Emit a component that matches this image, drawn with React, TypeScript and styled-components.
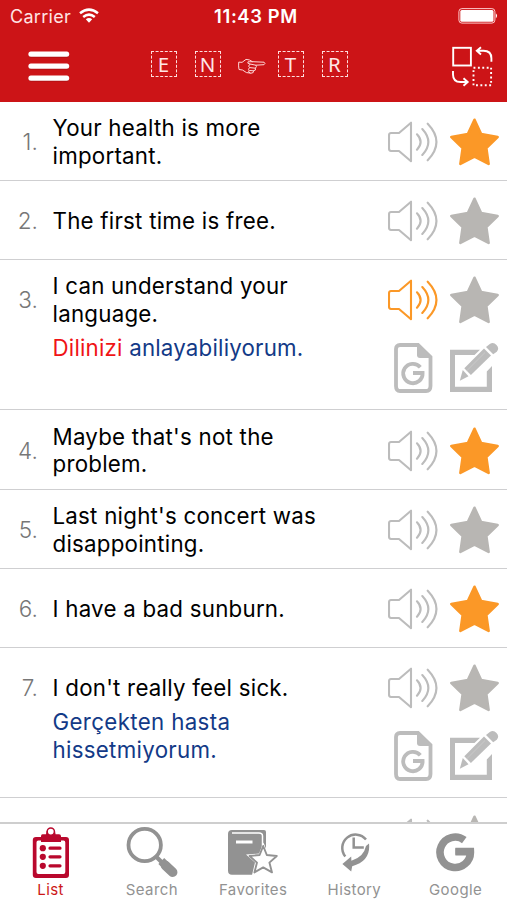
import React from "react";
import styled, { createGlobalStyle } from "styled-components";

const GlobalStyle = createGlobalStyle`
  *, *::before, *::after { box-sizing: border-box; }
  html, body { margin: 0; padding: 0; overflow: hidden; }
  svg { display: block; flex: none; }
`;

const Phone = styled.div`
  width: 507px;
  height: 900px;
  display: flex;
  flex-direction: column;
  overflow: hidden;
  background: #fff;
  font-family: Inter, "Liberation Sans", sans-serif;
`;

const Header = styled.header`
  height: 101.6px;
  flex: none;
  background: #cc1417;
  color: #fff;
`;

const StatusBar = styled.div`
  height: 32px;
  display: grid;
  grid-template-columns: 1fr auto 1fr;
  align-items: center;
  padding: 0 9px 0 10px;
`;

const Carrier = styled.div`
  display: flex;
  align-items: center;
  gap: 8px;
  font-size: 18px;
  letter-spacing: 0.3px;
  color: #ffe4e4;
`;

const Clock = styled.div`
  font-size: 18.4px;
  font-weight: 600;
  letter-spacing: 0.62px;
  padding-left: 4px;
`;

const BatterySlot = styled.div`
  display: flex;
  justify-content: flex-end;
`;

const NavBar = styled.nav`
  height: 69px;
  display: flex;
  align-items: center;
  justify-content: space-between;
  padding: 0 14px 0 28px;
`;

const Languages = styled.div`
  display: flex;
  align-items: center;
  margin: -6px 0 0 -24px;
`;

const LetterBox = styled.span<{ $gap: number }>`
  width: 26px;
  height: 26px;
  margin-right: ${(p) => p.$gap}px;
  border: 1px dashed #ffdede;
  display: flex;
  align-items: center;
  justify-content: center;
  font: 400 20.5px/24px "Noto Sans", sans-serif;
  color: #ffe6e6;
`;

const HandSlot = styled.span`
  padding-top: 5px;
  margin-right: 12px;
`;

const List = styled.main`
  flex: 1;
  min-height: 0;
  overflow: hidden;
`;

const Row = styled.article<{ $open?: boolean }>`
  height: ${(p) => (p.$open ? 150.4 : 79.2)}px;
  display: grid;
  grid-template-columns: 53px 1fr 119px;
  border-bottom: 1px solid #cfcfd1;
`;

const Index = styled.div`
  height: 79px;
  display: flex;
  align-items: center;
  justify-content: flex-end;
  padding: 1px 15px 0 0;
  font-size: 22.5px;
  font-weight: 300;
  letter-spacing: 0.1px;
  color: #777;
`;

const Phrase = styled.div<{ $lines: number }>`
  padding-top: ${(p) => (p.$lines > 1 ? 12.3 : 26.3)}px;
  font-size: 22.3px;
  line-height: 27.8px;
  white-space: nowrap;
  color: #000;
`;

const Line = styled.div<{ $track: number }>`
  margin-left: -0.5px;
  letter-spacing: ${(p) => p.$track}px;
`;

const Translation = styled.div`
  margin-top: 5.7px;
  color: #133a87;
`;

const Highlight = styled.span`
  color: #f01416;
`;

const Actions = styled.div`
  height: 146px;
  display: grid;
  grid-template-columns: 50px 50px;
  grid-template-rows: 81px 55px;
  column-gap: 12px;
  align-items: center;
  justify-items: center;
`;

const TabBar = styled.footer`
  height: 78.5px;
  flex: none;
  display: grid;
  grid-template-columns: repeat(5, 101.25px);
  border-top: 2px solid #cecece;
  background: #fff;
`;

const Tab = styled.div<{ $active?: boolean }>`
  display: flex;
  flex-direction: column;
  align-items: center;
  color: ${(p) => (p.$active ? "#b9082d" : "#929292")};
`;

const TabIcon = styled.div`
  height: 56px;
`;

const TabLabel = styled.div<{ $active?: boolean }>`
  font-size: 15px;
  line-height: 20px;
  letter-spacing: 0.4px;
  color: ${(p) => (p.$active ? "#cc1717" : "#929292")};
`;

const GRAY = "#bcbcbc";
const ORANGE = "#fb9827";

const Wifi = () => (
  <svg width="20" height="16" viewBox="0 0 20 16" fill="none" stroke="#fff" strokeWidth="2.5">
    <path d="M1 5.3Q10-2 19 5.3M4.2 9Q10 4.3 15.8 9" />
    <path d="M6.8 11.2Q10 8.9 13.2 11.2L10 14.7Z" fill="#fff" stroke="none" />
  </svg>
);

const Battery = () => (
  <svg width="40" height="16" viewBox="0 0 40 16">
    <rect x=".9" y=".6" width="36" height="14.5" rx="3" fill="none" stroke="#ffc9c9" />
    <rect x="2.3" y="2" width="33.2" height="11.7" rx="1.5" fill="#fff" />
    <path d="M37.8 5.2Q40.3 7.8 37.8 10.5Z" fill="#fff" />
  </svg>
);

const Menu = () => (
  <svg width="42" height="31" viewBox="0 0 42 31">
    <g fill="#7c0b0d" opacity=".45">
      <rect x="1" y="1.4" width="40" height="5.2" rx="2.6" />
      <rect x="1" y="13.4" width="40" height="5.2" rx="2.6" />
      <rect x="1" y="25.4" width="40" height="5.2" rx="2.6" />
    </g>
    <g fill="#fff">
      <rect x=".4" y="0.6" width="40.8" height="5.2" rx="2.5" />
      <rect x=".4" y="12.6" width="40.8" height="5.2" rx="2.5" />
      <rect x=".4" y="24.6" width="40.8" height="5.2" rx="2.5" />
    </g>
  </svg>
);

const Hand = () => (
  <svg width="28" height="17" viewBox="0 0 28 17" fill="none" stroke="#ffd8d8" strokeWidth="1" strokeLinecap="round" strokeLinejoin="round">
    <path d="M.7 4.5Q.3 8 1 11.5L4.5 12Q8 15.5 13 15.2Q16 15.2 15.5 12.8Q18.4 12.5 17.4 10.2Q19.2 8.6 17.8 7.2L26 6.7Q28 5.2 26 4.2L14.5 3.7Q11.5 1.3 8 1.4L4.4 4.1Z" />
    <path d="M14.5 3.7L10 3.8Q8.7 5.5 12 6L17.8 7.2M11.8 6.3Q9.3 8.4 11.7 9.6L17.4 10.2M11.3 9.7Q9.4 11.8 11.6 12.5L15.5 12.8M10.8 12.6Q9.8 14.5 12 15" />
  </svg>
);

const Swap = () => (
  <svg width="41" height="41" viewBox="0 0 41 41" fill="none" stroke="#fff" strokeWidth="1.9">
    <rect x="1.2" y="1.8" width="17.7" height="17.7" />
    <path d="M39.4 15.8V12.3Q39.4 4.8 31.5 4.8H25M29 1.3L24.8 4.8L29 8.5" />
    <path d="M1 25V28.5Q1 36 8.5 36H15.5M11.5 32.2L15.7 36L11.5 39.8" />
    <rect x="21.5" y="21.7" width="17.6" height="17.6" strokeDasharray="1.9 2.5" />
  </svg>
);

const Speaker = ({ active }: { active?: boolean }) => (
  <svg width="50" height="44" viewBox="0 0 50 44" fill="none" stroke={active ? ORANGE : GRAY} strokeWidth="2.1" strokeLinecap="round" strokeLinejoin="round">
    <path d="M3 13H11L23 2.7V41.3L11 31H3Q1 31 1 28.5V15.5Q1 13 3 13Z" />
    <path d="M29 14.3Q36.2 22 29 29.7M34.3 9Q46.4 22 34.3 35M39.7 3.7Q57.2 22 39.7 40.3" />
  </svg>
);

const Star = ({ active }: { active?: boolean }) => (
  <svg width="50" height="50" viewBox="0 0 50 50">
    <path
      d="M24.5 2.8L31.1 17L47.6 20L36.3 31L38.6 46.9L24.5 39.6L10.4 46.9L12.7 31L1.4 20L17.9 17Z"
      fill={active ? ORANGE : "#b8b6b3"}
      stroke={active ? ORANGE : "#b8b6b3"}
      strokeWidth="2.6"
      strokeLinejoin="round"
    />
  </svg>
);

const GoogleDoc = () => (
  <svg width="39" height="50" viewBox="0 0 39 50">
    <path d="M6 2H24L36.5 14V43Q36.5 48 32 48H6Q2 48 2 43V6Q2 2 6 2Z" fill="none" stroke={GRAY} strokeWidth="3.8" />
    <path d="M23 .5L38.3 15H26Q23 15 23 12Z" fill={GRAY} />
    <path d="M26.3 24.2A9.7 9.7 0 1 0 28.6 30H19" fill="none" stroke={GRAY} strokeWidth="3.8" />
  </svg>
);

const Edit = () => (
  <svg width="50" height="50" viewBox="0 0 50 50">
    <path d="M30 6.7H0V49H42V23L36.8 28.4V43.7H5V12H24.5Z" fill={GRAY} />
    <path d="M12.8 27L18.5 33.2L9.8 37.8Z" fill={GRAY} />
    <path d="M14.3 25.2L34 5.5L41 12.5L20.9 31.9Z" fill={GRAY} />
    <path d="M36 4L39.8 1Q43.5-1.2 46.5 2Q49.7 5.4 46.8 8.7L43.2 11.3Z" fill={GRAY} />
    <path d="M16.8 27.7L35 9.5" stroke="#ccc" strokeWidth=".8" />
  </svg>
);

const ListIcon = () => (
  <svg width="38" height="55" viewBox="0 0 38 55" fill="currentColor">
    <path fillRule="evenodd" d="M4 13H34Q37 13 37 16V51Q37 54 34 54H4Q.8 54 .8 51V16Q.8 13 4 13ZM6.3 16.6Q4.5 16.6 4.5 18.5V48Q4.5 50 6.3 50H31.5Q33.3 50 33.3 48V18.5Q33.3 16.6 31.5 16.6Z" />
    <path d="M10.5 10.2H14Q14.5 4 18.8 4Q23 4 23.6 10.2H27Q29 10.2 29 12.3V18H9V12.3Q9 10.2 10.5 10.2Z" />
    <circle cx="18.8" cy="7.6" r="3.6" fill="#fff" stroke="currentColor" strokeWidth="1.5" />
    <circle cx="10.8" cy="24.2" r="3.1" /><circle cx="10.8" cy="32.8" r="3.1" /><circle cx="10.8" cy="41.8" r="3.1" />
    <path d="M18 24.2H28M18 32.8H28M18 41.8H28" stroke="currentColor" strokeWidth="3.2" strokeLinecap="round" />
  </svg>
);

const SearchIcon = () => (
  <svg width="52" height="55" viewBox="0 0 52 55" fill="none" stroke="currentColor">
    <circle cx="18.7" cy="21" r="16.2" strokeWidth="3.8" />
    <path d="M30.5 33L36 38.5" strokeWidth="4.2" />
    <path d="M35.3 37L40.3 42" strokeWidth="8.2" />
    <path d="M39.5 41.5L46.7 48.3" strokeWidth="9.5" strokeLinecap="round" />
  </svg>
);

const FavoriteIcon = () => (
  <svg width="50" height="55" viewBox="0 0 50 55">
    <path d="M4 6H36Q38 6 38 8V44Q38 50.8 34 50.8H4Q0 50.8 0 46.5V10Q0 6 4 6Z" fill="currentColor" />
    <path d="M4 9H31Q34.5 9 34.5 12V50" fill="none" stroke="#fff" strokeWidth="1.5" />
    <path d="M8 18H24.5" stroke="#fff" strokeWidth="3" />
    <path d="M35.5 18.5L40 29.5L52 30.5L43 38.5L46 51H24L27 38.5L18 30.5L31 29.5Z" fill="#fff" />
    <path d="M35.2 22L38.8 31L48.8 32L41.4 38.6L44 48.4L35.2 43.4L26.4 48.4L29 38.6L21.6 32L31.6 31Z" fill="#fff" stroke="currentColor" strokeWidth="1.9" strokeLinejoin="round" />
  </svg>
);

const HistoryIcon = () => (
  <svg width="32" height="55" viewBox="0 0 32 55" fill="none" stroke="currentColor">
    <path d="M7.3 32.5A12.9 12.9 0 1 1 28 15.5" strokeWidth="2.5" />
    <path d="M15.7 13.5V23.5H25.8" strokeWidth="2.5" />
    <path d="M31 19.5Q33 37 14.2 42.2L13.2 47.5L4.4 40L13.2 32.5L13.4 36.7Q25.8 33 28 22Z" fill="currentColor" stroke="none" />
  </svg>
);

const GoogleIcon = () => (
  <svg width="39" height="55" viewBox="0 0 39 55" fill="none" stroke="currentColor" strokeWidth="7.6">
    <path d="M28.3 16.1A15.2 15.2 0 1 0 34.4 27.6H19.4" />
    <path d="M19.4 27.5H38" strokeWidth="6.5" />
  </svg>
);

type Entry = {
  lines: string[];
  starred?: boolean;
  playing?: boolean;
  translation?: React.ReactNode;
};

const entries: Entry[] = [
  { lines: ["Your health is more", "important."], starred: true },
  { lines: ["The first time is free."] },
  {
    lines: ["I can understand your", "language."],
    playing: true,
    translation: <Line $track={0.2}><Highlight>Dilinizi</Highlight> anlayabiliyorum.</Line>,
  },
  { lines: ["Maybe that's not the", "problem."], starred: true },
  { lines: ["Last night's concert was", "disappointing."] },
  { lines: ["I have a bad sunburn."], starred: true },
  {
    lines: ["I don't really feel sick."],
    translation: <><Line $track={0.35}>Gerçekten hasta</Line><Line $track={0.3}>hissetmiyorum.</Line></>,
  },
];

const tabs = [
  { label: "List", icon: <ListIcon />, active: true },
  { label: "Search", icon: <SearchIcon /> },
  { label: "Favorites", icon: <FavoriteIcon /> },
  { label: "History", icon: <HistoryIcon /> },
  { label: "Google", icon: <GoogleIcon /> },
];

export default function App() {
  return (
    <>
      <GlobalStyle />
      <Phone>
        <Header>
          <StatusBar>
            <Carrier>Carrier <Wifi /></Carrier>
            <Clock>11:43 PM</Clock>
            <BatterySlot><Battery /></BatterySlot>
          </StatusBar>
          <NavBar>
            <Menu />
            <Languages>
              <LetterBox $gap={18}>E</LetterBox>
              <LetterBox $gap={17}>N</LetterBox>
              <HandSlot><Hand /></HandSlot>
              <LetterBox $gap={18}>T</LetterBox>
              <LetterBox $gap={0}>R</LetterBox>
            </Languages>
            <Swap />
          </NavBar>
        </Header>
        <List>
          {entries.map((entry, i) => (
            <Row key={i} $open={!!entry.translation}>
              <Index>{i + 1}.</Index>
              <Phrase $lines={entry.lines.length}>
                {entry.lines.map((line) => (
                  <Line key={line} $track={0.24}>{line}</Line>
                ))}
                {entry.translation && <Translation>{entry.translation}</Translation>}
              </Phrase>
              <Actions>
                <Speaker active={entry.playing} />
                <Star active={entry.starred} />
                {entry.translation && <><GoogleDoc /><Edit /></>}
              </Actions>
            </Row>
          ))}
          <Row>
            <Index />
            <Phrase $lines={1} />
            <Actions><Speaker /><Star /></Actions>
          </Row>
        </List>
        <TabBar>
          {tabs.map((tab) => (
            <Tab key={tab.label} $active={tab.active}>
              <TabIcon>{tab.icon}</TabIcon>
              <TabLabel $active={tab.active}>{tab.label}</TabLabel>
            </Tab>
          ))}
        </TabBar>
      </Phone>
    </>
  );
}
